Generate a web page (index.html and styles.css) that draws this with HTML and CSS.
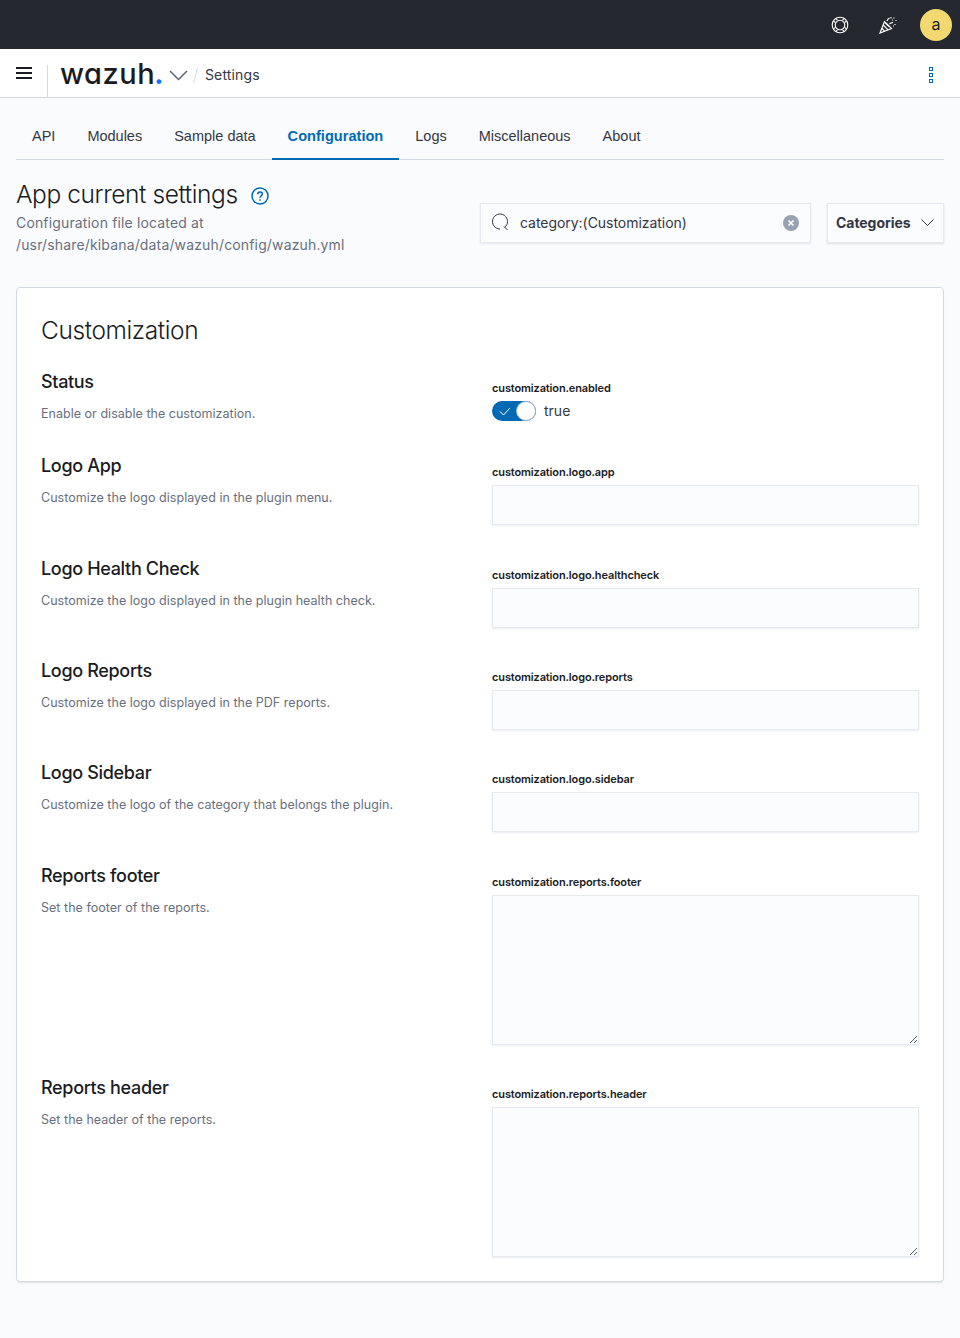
FILE: index.html
```html
<!DOCTYPE html>
<html lang="en">
<head>
<meta charset="utf-8">
<title>Settings</title>
<link rel="stylesheet" href="styles.css">
</head>
<body>
<header class="topbar">
  <svg class="top-icon" width="18" height="18" viewBox="0 0 18 18" fill="none" stroke="#fff" stroke-width="1.100"><circle cx="9" cy="9" r="7.800"/><circle cx="9" cy="9" r="4.800"/><path d="M4.600 2.300l2 2M2.300 4.600l2 2M13.400 2.300l-2 2M15.700 4.600l-2 2M4.600 15.700l2-2M2.300 13.400l2-2M13.400 15.700l-2-2M15.700 13.400l-2-2"/></svg>
  <svg class="top-icon party" width="18" height="18" viewBox="0 0 18 18" fill="none" stroke="#fff" stroke-width="1.200"><path d="M1 17L5.500 5.500l7 7z"/><path d="M3 12.500l2.500 2.500M4.200 9l4.800 4.800M6 6.500l4 4"/><path d="M8 5c.5-1.500 1-2.500 2.500-3M10.500 8c1-1 2-1.500 3.500-1.300"/><path d="M12 1v1.500M15 1.500v1M16.500 4.500h1M13 4h1M16 8v1M14 10h1"/></svg>
  <div class="avatar">a</div>
</header>
<nav class="breadbar">
  <svg class="menu" width="16" height="12" viewBox="0 0 16 12" fill="#1a1c21"><rect y="0" width="16" height="2"/><rect y="5" width="16" height="2"/><rect y="10" width="16" height="2"/></svg>
  <div class="logo-wrap">
    <span class="logo">wazuh<span class="logo-dot">.</span></span>
    <svg class="logo-caret" width="19" height="11" viewBox="0 0 19 11" fill="none" stroke="#5f6570" stroke-width="1.500"><path d="M1 1l8.500 8.500L18 1"/></svg>
    <span class="slash"></span>
    <span class="crumb">Settings</span>
  </div>
  <svg class="dots" width="4" height="16" viewBox="0 0 4 16" fill="none" stroke="#006bb4" stroke-width="1"><rect x=".5" y=".5" width="3" height="3"/><rect x=".5" y="6.500" width="3" height="3"/><rect x=".5" y="12.500" width="3" height="3"/></svg>
</nav>
<main class="page">
  <div class="tabs">
    <a class="tab">API</a>
    <a class="tab">Modules</a>
    <a class="tab">Sample data</a>
    <a class="tab active">Configuration</a>
    <a class="tab">Logs</a>
    <a class="tab">Miscellaneous</a>
    <a class="tab">About</a>
  </div>
  <section class="head">
    <div class="head-left">
      <h1 class="page-title">App current settings
        <svg class="help" width="18" height="18" viewBox="0 0 18 18" fill="none" stroke="#006bb4" stroke-width="1.500"><circle cx="9" cy="9" r="8"/><path d="M6.700 7.200c0-1.400 1-2.300 2.400-2.300s2.300.9 2.300 2.100c0 1.800-2.400 1.700-2.400 3.800"/><path d="M9 12.300v1.500"/></svg>
      </h1>
      <p class="page-sub">Configuration file located at<br>/usr/share/kibana/data/wazuh/config/wazuh.yml</p>
    </div>
    <div class="search">
      <svg class="search-icon" width="18" height="18" viewBox="0 0 18 18" fill="none" stroke="#343741" stroke-width="1"><path d="M13.500 14.500A7.500 7.500 0 1 0 9 16"/><path d="M13 13.500l3.500 3.500"/></svg>
      <input class="search-input" type="text" value="category:(Customization)">
      <svg class="clear" width="16" height="16" viewBox="0 0 16 16"><circle cx="8" cy="8" r="8" fill="#98a2b3"/><path d="M5.500 5.500l5 5M10.500 5.500l-5 5" stroke="#fff" stroke-width="1.600"/></svg>
    </div>
    <button class="cat-btn">Categories
      <svg class="cat-caret" width="13" height="8" viewBox="0 0 13 8" fill="none" stroke="#343741" stroke-width="1"><path d="M.5.500L6.500 6.500l6-6"/></svg>
    </button>
  </section>
  <section class="panel">
    <h2 class="panel-title">Customization</h2>
    <div class="row row-status">
      <div class="desc"><h3>Status</h3><p>Enable or disable the customization.</p></div>
      <div class="field">
        <label class="key">customization.enabled</label>
        <div class="switch-row">
          <span class="switch">
            <svg width="12" height="9" viewBox="0 0 12 9" fill="none" stroke="#fff" stroke-width="1"><path d="M1 4.500L4.500 8 11 1"/></svg>
            <span class="knob"></span>
          </span>
          <span class="switch-label">true</span>
        </div>
      </div>
    </div>
    <div class="row">
      <div class="desc"><h3>Logo App</h3><p>Customize the logo displayed in the plugin menu.</p></div>
      <div class="field"><label class="key">customization.logo.app</label><input class="text" type="text"></div>
    </div>
    <div class="row">
      <div class="desc"><h3>Logo Health Check</h3><p>Customize the logo displayed in the plugin health check.</p></div>
      <div class="field"><label class="key">customization.logo.healthcheck</label><input class="text" type="text"></div>
    </div>
    <div class="row">
      <div class="desc"><h3>Logo Reports</h3><p>Customize the logo displayed in the PDF reports.</p></div>
      <div class="field"><label class="key">customization.logo.reports</label><input class="text" type="text"></div>
    </div>
    <div class="row">
      <div class="desc"><h3>Logo Sidebar</h3><p>Customize the logo of the category that belongs the plugin.</p></div>
      <div class="field"><label class="key">customization.logo.sidebar</label><input class="text" type="text"></div>
    </div>
    <div class="row">
      <div class="desc"><h3>Reports footer</h3><p>Set the footer of the reports.</p></div>
      <div class="field"><label class="key">customization.reports.footer</label><textarea class="area"></textarea></div>
    </div>
    <div class="row">
      <div class="desc"><h3>Reports header</h3><p>Set the header of the reports.</p></div>
      <div class="field"><label class="key">customization.reports.header</label><textarea class="area"></textarea></div>
    </div>
  </section>
</main>
</body>
</html>
```
FILE: styles.css
```css
* { box-sizing: border-box; }
html, body { margin: 0; padding: 0; }
body {
  width: 960px;
  height: 1338px;
  overflow: hidden;
  background: #fafbfd;
  color: #343741;
  font-family: Inter, "Liberation Sans", sans-serif;
  font-size: 14px;
}
.topbar {
  height: 49px;
  background: #25282f;
  display: flex;
  align-items: center;
  justify-content: flex-end;
  padding-right: 8px;
}
.top-icon { margin-right: 30px; }
.party { margin-right: 23px; }
.avatar {
  width: 32px;
  height: 32px;
  border-radius: 50%;
  background: #f1d86f;
  color: #1a1c21;
  font-size: 16px;
  padding-bottom: 2px;
  display: flex;
  align-items: center;
  justify-content: center;
}
.breadbar {
  height: 49px;
  background: #fff;
  border-bottom: 1px solid #d3dae6;
  display: flex;
  align-items: center;
  position: relative;
  padding-left: 16px;
}
.logo-wrap {
  margin-left: 15px;
  height: 32px;
  align-self: flex-end;
  border-left: 1px solid #d3dae6;
  padding-left: 12px;
  display: flex;
  align-items: flex-start;
  flex: 1;
}
.logo {
  font-family: Inter, sans-serif;
  font-feature-settings: "cv11";
  font-size: 29px;
  font-weight: 500;
  line-height: 18px;
  color: #1a1c21;
  letter-spacing: .5px;
  width: 100px;
  flex: none;
  white-space: nowrap;
}
.logo-dot { color: #0a7cff; font-weight: 700; letter-spacing: 0; margin-left: -1px; }
.logo-caret { margin: 5px 0 0 9px; }
.slash {
  width: 1px;
  height: 15px;
  margin: 3px 0 0 7px;
  background: #d3dae6;
  transform: skewX(-15deg);
}
.crumb { margin: 1px 0 0 9px; line-height: 18px; color: #343741; font-size: 14px; letter-spacing: .14px; }
.dots { margin-right: 27px; margin-top: 4px; }
.page { padding: 0 16px; }
.tabs {
  display: flex;
  height: 62px;
  padding-top: 14px;
  border-bottom: 1px solid #d3dae6;
}
.tab {
  padding: 0 16px;
  height: 48px;
  line-height: 48px;
  font-family: "Liberation Sans", Arial, sans-serif;
  font-size: 14.500px;
  color: #343741;
}
.tab.active {
  color: #006bb4;
  font-size: 14.600px;
  font-weight: 700;
  border-bottom: 2px solid #006bb4;
}
.head {
  display: flex;
  align-items: flex-start;
  height: 127px;
  padding-top: 18px;
}
.head-left { flex: 1; }
.page-title {
  margin: 0;
  font-size: 24.500px;
  line-height: 32px;
  font-weight: 300;
  color: #1a1c21;
  letter-spacing: -.4px;
}
.help { margin-left: 7px; vertical-align: -2px; }
.page-sub {
  margin: 2px 0 0;
  font-size: 14px;
  line-height: 22px;
  color: #69707d;
  letter-spacing: .15px;
}
.search {
  width: 331px;
  height: 40px;
  margin-top: 25px;
  display: flex;
  align-items: center;
  padding: 0 11px 0 10px;
  background: #fbfcfd;
  border: 1px solid #e6e9f0;
  box-shadow: 0 1px 2px rgba(152,162,179,.2);
}
.search-icon { flex: none; margin-top: -2px; }
.search-input {
  flex: 1;
  min-width: 0;
  margin-left: 11px;
  padding: 0 0 2px;
  border: 0;
  outline: 0;
  background: transparent;
  font: 14px Inter, sans-serif;
  letter-spacing: -.04px;
  color: #343741;
}
.cat-btn {
  width: 117px;
  height: 40px;
  margin: 25px 0 0 16px;
  padding: 0 0 2px 8px;
  display: flex;
  align-items: center;
  gap: 10px;
  background: #fbfcfd;
  border: 1px solid #e6e9f0;
  box-shadow: 0 1px 2px rgba(152,162,179,.3);
  font: 700 14px Inter, sans-serif;
  letter-spacing: -.05px;
  color: #343741;
}
.cat-caret { margin-top: 2px; }
.panel {
  height: 995px;
  background: #fff;
  border: 1px solid #d3dae6;
  border-radius: 4px;
  box-shadow: 0 2px 2px -1px rgba(152,162,179,.3);
  padding: 24px;
}
.panel-title {
  margin: 0 0 24px;
  font-size: 24.500px;
  line-height: 36px;
  font-weight: 300;
  color: #1a1c21;
  letter-spacing: -.4px;
}
.row {
  display: flex;
  padding-bottom: 33.400px;
}
.row-status { height: 84.120px; padding-bottom: 0; }
.desc { width: 451px; flex: none; }
.desc h3 {
  margin: -1px 0 0;
  font-size: 18px;
  line-height: 22px;
  font-weight: 500;
  color: #1a1c21;
  letter-spacing: -.33px;
}
.desc p {
  margin: 11px 0 0;
  font-size: 12.530px;
  line-height: 20px;
  color: #69707d;
  letter-spacing: .02px;
}
.field { width: 427px; padding-top: 9px; }
.key {
  display: block;
  height: 14px;
  margin-bottom: 6px;
  font-size: 11px;
  line-height: 14px;
  font-weight: 600;
  color: #1a1c21;
  letter-spacing: -.13px;
}
.text, .area {
  display: block;
  width: 427px;
  background: #fbfcfd;
  border: 1px solid #e6e9f0;
  box-shadow: 0 1px 2px rgba(152,162,179,.2);
  outline: 0;
  padding: 0;
  margin: 0;
}
.text { height: 40px; }
.area { height: 150px; }
.switch-row { display: flex; align-items: center; gap: 8px; margin-top: 1px; }
.switch {
  width: 44px;
  height: 20px;
  border-radius: 10px;
  background: #006bb4;
  display: flex;
  align-items: center;
  padding-left: 7px;
  position: relative;
}
.knob {
  position: absolute;
  right: 0;
  top: 0;
  width: 20px;
  height: 20px;
  border-radius: 50%;
  background: #fff;
  border: 1px solid #a7b4c6;
}
.switch-label { font-size: 14px; line-height: 20px; color: #343741; }
```
